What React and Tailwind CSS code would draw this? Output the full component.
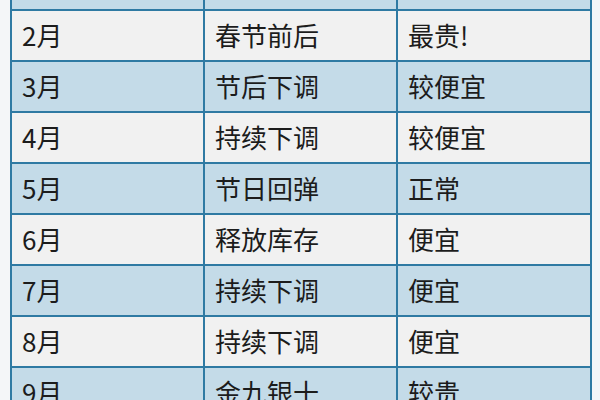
import React from "react";

const rows = [
  ["2月", "春节前后", "最贵!"],
  ["3月", "节后下调", "较便宜"],
  ["4月", "持续下调", "较便宜"],
  ["5月", "节日回弹", "正常"],
  ["6月", "释放库存", "便宜"],
  ["7月", "持续下调", "便宜"],
  ["8月", "持续下调", "便宜"],
  ["9月", "金九银十", "较贵"],
];

export default function App() {
  return (
    <div
      className="w-[600px] h-[400px] overflow-hidden bg-[#f4f6f8] pl-[10px] pr-[8px]"
      style={{ fontFamily: '"Noto Sans CJK SC", "Noto Sans", sans-serif' }}
    >
      <div className="mt-[-40px] border-l-2 border-[#2f7aa3] w-[582px]">
        <div className="grid grid-cols-[193px_193px_194px] h-[51px] bg-[#c4dbe8] border-b-2 border-[#2f7aa3]">
          <div className="border-r-2 border-[#2f7aa3]" />
          <div className="border-r-2 border-[#2f7aa3]" />
          <div className="border-r-2 border-[#2f7aa3]" />
        </div>
        {rows.map((r, i) => (
          <div
            key={i}
            className={
              "grid grid-cols-[193px_193px_194px] h-[51px] border-b-2 border-[#2f7aa3] text-[26px] leading-none text-[#1c1c1c] " +
              (i % 2 === 0 ? "bg-[#f1f1f1]" : "bg-[#c4dbe8]")
            }
          >
            {r.map((c, j) => (
              <div
                key={j}
                className="border-r-2 border-[#2f7aa3] flex items-center pl-[10px] pb-[2px]"
              >
                {c}
              </div>
            ))}
          </div>
        ))}
      </div>
    </div>
  );
}
